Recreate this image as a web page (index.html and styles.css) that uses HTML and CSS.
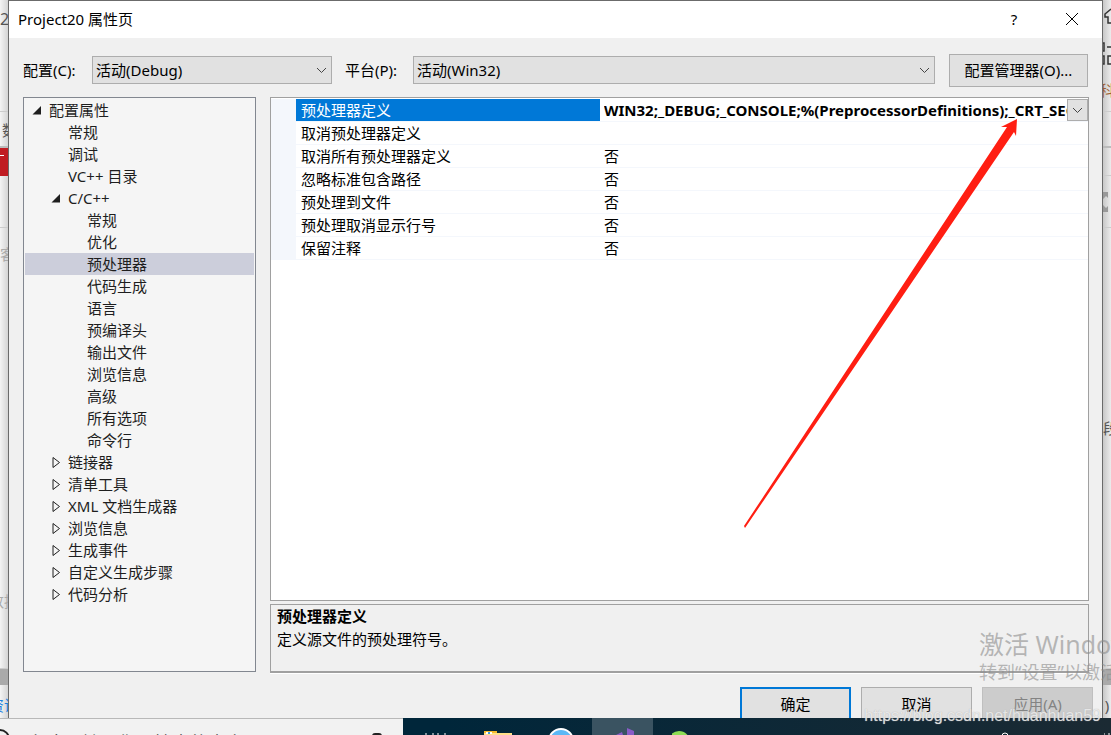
FILE: index.html
```html
<!DOCTYPE html>
<html lang="zh-CN">
<head>
    <meta charset="UTF-8">
    <meta name="viewport" content="width=device-width, initial-scale=1.0">
    <title>Project20 属性页</title>
    <link rel="stylesheet" href="styles.css">
</head>
<body>
    <div class="desktop">
        <!-- Page behind the dialog, left edge -->
        <div class="edge edge-left">
            <div class="edge-block edge-top"><span class="edge-title">2</span></div>
            <div class="edge-block edge-nav">数</div>
            <div class="edge-block edge-red"><i></i></div>
            <div class="edge-block edge-tools"></div>
            <div class="edge-block edge-body">
                <span class="faint">客</span>
                <span class="faint edge-cut">数据</span>
            </div>
            <div class="edge-scroll"></div>
            <div class="edge-status"><span class="edge-cut blue">资讯</span></div>
        </div>

        <div class="dialog">
            <div class="title-bar">
                <h1>Project20 属性页</h1>
                <button class="title-button" aria-label="帮助">?</button>
                <button class="title-button" aria-label="关闭">
                    <svg width="14" height="14" viewBox="0 0 14 14"><path d="M1 1L13 13M13 1L1 13" stroke="#000" fill="none"/></svg>
                </button>
            </div>

            <div class="config-bar">
                <label for="config">配置(C):</label>
                <div class="select-box select-config">
                    <select id="config"><option>活动(Debug)</option></select>
                    <svg class="chevron" width="11" height="7" viewBox="0 0 11 7"><path d="M1 1L5.500 5.500L10 1" stroke="#444" fill="none"/></svg>
                </div>
                <label for="platform" class="platform-label">平台(P):</label>
                <div class="select-box select-platform">
                    <select id="platform"><option>活动(Win32)</option></select>
                    <svg class="chevron" width="11" height="7" viewBox="0 0 11 7"><path d="M1 1L5.500 5.500L10 1" stroke="#444" fill="none"/></svg>
                </div>
                <button class="button manager-button">配置管理器(O)...</button>
            </div>

            <div class="main">
                <ul class="tree" role="tree">
                    <li class="level-1" role="treeitem"><svg width="9" height="9" viewBox="0 0 9 9"><path d="M8.500 0V8.500H0Z" fill="#1e1e1e"/></svg>配置属性</li>
                    <li class="level-2" role="treeitem">常规</li>
                    <li class="level-2" role="treeitem">调试</li>
                    <li class="level-2" role="treeitem">VC++ 目录</li>
                    <li class="level-2" role="treeitem"><svg width="9" height="9" viewBox="0 0 9 9"><path d="M8.500 0V8.500H0Z" fill="#1e1e1e"/></svg>C/C++</li>
                    <li class="level-3" role="treeitem">常规</li>
                    <li class="level-3" role="treeitem">优化</li>
                    <li class="level-3 selected" role="treeitem" aria-selected="true">预处理器</li>
                    <li class="level-3" role="treeitem">代码生成</li>
                    <li class="level-3" role="treeitem">语言</li>
                    <li class="level-3" role="treeitem">预编译头</li>
                    <li class="level-3" role="treeitem">输出文件</li>
                    <li class="level-3" role="treeitem">浏览信息</li>
                    <li class="level-3" role="treeitem">高级</li>
                    <li class="level-3" role="treeitem">所有选项</li>
                    <li class="level-3" role="treeitem">命令行</li>
                    <li class="level-2" role="treeitem"><svg width="9" height="11" viewBox="0 0 9 11"><path d="M1.500 0.500V10.500L8 5.500Z" stroke="#1e1e1e" fill="none"/></svg>链接器</li>
                    <li class="level-2" role="treeitem"><svg width="9" height="11" viewBox="0 0 9 11"><path d="M1.500 0.500V10.500L8 5.500Z" stroke="#1e1e1e" fill="none"/></svg>清单工具</li>
                    <li class="level-2" role="treeitem"><svg width="9" height="11" viewBox="0 0 9 11"><path d="M1.500 0.500V10.500L8 5.500Z" stroke="#1e1e1e" fill="none"/></svg>XML 文档生成器</li>
                    <li class="level-2" role="treeitem"><svg width="9" height="11" viewBox="0 0 9 11"><path d="M1.500 0.500V10.500L8 5.500Z" stroke="#1e1e1e" fill="none"/></svg>浏览信息</li>
                    <li class="level-2" role="treeitem"><svg width="9" height="11" viewBox="0 0 9 11"><path d="M1.500 0.500V10.500L8 5.500Z" stroke="#1e1e1e" fill="none"/></svg>生成事件</li>
                    <li class="level-2" role="treeitem"><svg width="9" height="11" viewBox="0 0 9 11"><path d="M1.500 0.500V10.500L8 5.500Z" stroke="#1e1e1e" fill="none"/></svg>自定义生成步骤</li>
                    <li class="level-2" role="treeitem"><svg width="9" height="11" viewBox="0 0 9 11"><path d="M1.500 0.500V10.500L8 5.500Z" stroke="#1e1e1e" fill="none"/></svg>代码分析</li>
                </ul>

                <div class="right">
                    <div class="properties">
                        <table>
                            <tr class="active">
                                <td class="gutter"></td>
                                <th><label for="definitions">预处理器定义</label></th>
                                <td>
                                    <div class="editor">
                                        <input type="text" id="definitions" value="WIN32;_DEBUG;_CONSOLE;%(PreprocessorDefinitions);_CRT_SECURE_NO_WARNINGS">
                                        <button class="drop-button" aria-label="展开">
                                            <svg width="11" height="7" viewBox="0 0 11 7"><path d="M1 1L5.500 5.500L10 1" stroke="#444" fill="none"/></svg>
                                        </button>
                                    </div>
                                </td>
                            </tr>
                            <tr><td class="gutter"></td><th>取消预处理器定义</th><td></td></tr>
                            <tr><td class="gutter"></td><th>取消所有预处理器定义</th><td>否</td></tr>
                            <tr><td class="gutter"></td><th>忽略标准包含路径</th><td>否</td></tr>
                            <tr><td class="gutter"></td><th>预处理到文件</th><td>否</td></tr>
                            <tr><td class="gutter"></td><th>预处理取消显示行号</th><td>否</td></tr>
                            <tr><td class="gutter"></td><th>保留注释</th><td>否</td></tr>
                        </table>
                    </div>
                    <div class="description">
                        <h2>预处理器定义</h2>
                        <p>定义源文件的预处理符号。</p>
                    </div>
                </div>
            </div>

            <div class="footer">
                <button class="button default">确定</button>
                <button class="button">取消</button>
                <button class="button" disabled>应用(A)</button>
            </div>
        </div>

        <!-- Page behind the dialog, right edge -->
        <div class="edge edge-right">
            <div class="edge-block edge-top">
                <svg width="8" height="66" viewBox="0 0 8 66">
                    <path d="M8 1L2 6V9H5V15H8" stroke="#333" stroke-width="1.500" fill="none"/>
                    <path d="M0 35H1V43H0M4 39H8M0 48H1V56H0M8 48H5V56H8" stroke="#333" stroke-width="1.500" fill="none"/>
                </svg>
                <span class="edge-cut brown">科</span>
            </div>
            <div class="edge-block edge-nav"></div>
            <div class="edge-block edge-blank"></div>
            <div class="edge-block edge-tools">
                <svg width="8" height="20" viewBox="0 0 8 20"><path d="M0 0H5V6L3 4L0 7ZM0 13L3 16L5 14V20H0Z" fill="#999"/></svg>
            </div>
            <div class="edge-block edge-body"><span class="edge-mid">段</span></div>
            <div class="edge-scroll"></div>
            <div class="edge-status"><span class="edge-cut">)</span></div>
        </div>

        <svg class="arrow" width="280" height="414" viewBox="0 0 280 414">
            <path d="M275 2L259 10L265 10L2 409L3 411L272 15L274 19Z" fill="#ff1e12"/>
        </svg>
        <div class="activate">
            <div class="activate-title">激活 Windows</div>
            <div>转到“设置”以激活 Windows。</div>
        </div>
    </div>

    <div class="taskbar">
        <label class="search">
            <svg width="12" height="17" viewBox="0 0 12 17"><circle cx="0" cy="20" r="9" stroke="#222" stroke-width="2" fill="none"/></svg>
            <input type="text" placeholder="在这里输入你要搜索的内容">
            <svg class="mic" width="12" height="17" viewBox="0 0 12 17"><rect x="2" y="15" width="8" height="12" rx="2" stroke="#222" stroke-width="2" fill="#888"/></svg>
        </label>
        <div class="tile">
            <svg width="24" height="17" viewBox="0 0 24 17"><path d="M3 15V17M15 15V17M22 15V17M9 16H11" stroke="#fff"/></svg>
        </div>
        <div class="tile">
            <svg width="28" height="17" viewBox="0 0 28 17"><path d="M0 13H13V17H0Z" fill="#f5b92d"/><path d="M13 15H28V17H0V15Z" fill="#ffe08a"/><path d="M2 14H8V16H2Z" fill="#fff"/><path d="M4 14H6V16H4Z" fill="#3b9be0"/></svg>
        </div>
        <div class="tile">
            <svg width="26" height="17" viewBox="0 0 26 17"><circle cx="13" cy="23" r="12" fill="#5bb8f5" stroke="#fff" stroke-width="2"/></svg>
        </div>
        <div class="tile open">
            <svg width="32" height="17" viewBox="0 0 32 17"><path d="M20 10L27 13V17H20ZM9 17L15 14L16 17Z" fill="#8a5cc7"/></svg>
        </div>
        <div class="tile">
            <svg width="26" height="17" viewBox="0 0 26 17"><circle cx="7" cy="24" r="11" fill="#8fdd55"/></svg>
        </div>
        <div class="tray">
            <svg width="12" height="17" viewBox="0 0 12 17"><circle cx="6" cy="18" r="3" stroke="#fff" fill="none"/></svg>
            <svg width="8" height="17" viewBox="0 0 8 17"><path d="M1 16H2M6 15V17" stroke="#fff"/></svg>
        </div>
        <div class="blog-mark">https://blog.csdn.net/huanhuan59</div>
    </div>
</body>
</html>
```
FILE: styles.css
```css
* {
    box-sizing: border-box;
}

body {
    margin: 0;
    height: 100vh;
    display: flex;
    flex-direction: column;
    overflow: hidden;
    font-family: "Noto Sans", "Noto Sans CJK SC", sans-serif;
    font-size: 15px;
    line-height: 22px;
    color: #000;
    background: #f0f0f0;
}

button,
input,
select {
    font: inherit;
    color: inherit;
    margin: 0;
    padding: 0;
    border: none;
    border-radius: 0;
}

svg {
    flex: none;
}

.desktop {
    flex: 1;
    min-height: 0;
    display: flex;
    position: relative;
    overflow: hidden;
}

/* Page edges behind the dialog */
.edge {
    width: 8px;
    flex: none;
    display: flex;
    flex-direction: column;
    overflow: hidden;
    color: #555;
}

.edge-left {
    background: linear-gradient(to right, #f4f4f4, #d4d4d4);
}

.edge-right {
    background: linear-gradient(to right, #c8c8c8, #ececec);
}

.edge-block {
    flex: none;
    border-bottom: 1px solid #ccc;
    overflow: hidden;
}

.edge-top {
    height: 112px;
    padding-top: 8px;
}

.edge-title {
    font-size: 16px;
}

.edge-nav {
    height: 36px;
    padding: 7px 0 0 2px;
    border-bottom: 2px solid #bbb;
}

.edge-red {
    height: 28px;
    padding-top: 7px;
    background: #c01c22;
    border: none;
}

.edge-red i {
    display: block;
    width: 4px;
    height: 1px;
    background: #fff;
}

.edge-blank {
    height: 28px;
}

.edge-tools {
    height: 52px;
    padding-top: 16px;
}

.edge-body {
    flex: 1;
    display: flex;
    flex-direction: column;
    justify-content: space-between;
    padding: 15px 0 56px;
}

.edge-cut {
    display: flex;
    justify-content: center;
    white-space: nowrap;
}

.edge-mid {
    margin: auto 0;
}

.faint {
    color: #aaa;
}

.blue {
    color: #1a7fe0;
}

.brown {
    color: #a06030;
}

.edge-scroll {
    height: 16px;
    flex: none;
    background: #aaa;
}

.edge-status {
    height: 33px;
    flex: none;
    padding-top: 9px;
}

/* Dialog */
.dialog {
    flex: 1;
    min-width: 0;
    display: flex;
    flex-direction: column;
    overflow: hidden;
    background: #f0f0f0;
    border: 1px solid #6b6b6b;
    border-bottom: none;
}

.title-bar {
    flex: none;
    display: flex;
    align-items: center;
    height: 37px;
    padding: 0 1px 2px 9px;
    background: #fff;
}

.title-bar h1 {
    flex: 1;
    margin: 0;
    font-size: 15px;
    font-weight: normal;
}

.title-button {
    width: 58px;
    height: 35px;
    display: flex;
    align-items: center;
    justify-content: center;
    background: #fff;
}

.config-bar {
    flex: none;
    display: flex;
    align-items: center;
    height: 59px;
    padding: 5px 14px 0;
}

.config-bar label {
    width: 69px;
    flex: none;
}

.config-bar .platform-label {
    width: 68px;
    margin-left: 13px;
}

.select-box {
    display: grid;
    align-items: center;
}

.select-box > * {
    grid-area: 1 / 1;
}

.select-config {
    flex: 240;
}

.select-platform {
    flex: 522;
}

select {
    appearance: none;
    width: 100%;
    height: 28px;
    padding-left: 3px;
    background: #e1e1e1;
    border: 1px solid #adadad;
}

.chevron {
    justify-self: end;
    margin-right: 5px;
    pointer-events: none;
}

.button {
    background: #e1e1e1;
    border: 1px solid #adadad;
}

.manager-button {
    width: 139px;
    height: 33px;
    flex: none;
    margin-left: 14px;
}

.main {
    flex: 1;
    min-height: 0;
    display: flex;
    gap: 14px;
    padding: 0 13px 0 14px;
}

.tree {
    width: 233px;
    flex: none;
    margin: 0;
    padding: 1px;
    overflow: hidden;
    list-style: none;
    color: #1e1e1e;
    background: #f5f5f5;
    border: 1px solid #828790;
}

.tree li {
    display: flex;
    align-items: center;
    height: 22px;
}

.tree svg {
    width: 16px;
    margin-left: -20px;
    margin-right: 4px;
}

.level-1 {
    padding-left: 24px;
}

.level-2 {
    padding-left: 43px;
}

.level-3 {
    padding-left: 62px;
}

.selected {
    background: #cccedb;
}

.right {
    flex: 1;
    min-width: 0;
    display: flex;
    flex-direction: column;
    gap: 3px;
    margin-bottom: -1px;
}

.properties {
    flex: 1;
    min-height: 0;
    padding-top: 1px;
    overflow: hidden;
    background: #fff;
    border: 1px solid #a0a0a0;
}

table {
    width: 100%;
    table-layout: fixed;
    border-collapse: separate;
    border-spacing: 0;
}

th,
td {
    height: 23px;
    padding: 0 0 0 4px;
    font-weight: normal;
    text-align: left;
    line-height: 22px;
    border-bottom: 1px solid #f4f7fc;
}

th {
    width: 304px;
    padding-left: 5px;
}

.gutter {
    width: 25px;
    padding: 0;
    background: #f4f7fc;
}

.active th {
    color: #fff;
    background: #0078d7;
    background-clip: padding-box;
}

.editor {
    display: flex;
    height: 22px;
}

.editor input {
    flex: 1;
    min-width: 0;
    font-weight: bold;
    background: #fff;
    outline: none;
}

.drop-button {
    width: 21px;
    flex: none;
    display: flex;
    align-items: center;
    justify-content: center;
    background: #e1e1e1;
    border: 1px solid #adadad;
}

.description {
    flex: none;
    height: 69px;
    padding: 0 6px;
    border: 1px solid #a0a0a0;
    border-bottom-width: 2px;
    box-shadow: 0 1px #fff;
}

.description h2,
.description p {
    margin: 0;
    font-size: 15px;
    line-height: 23px;
}

.footer {
    flex: none;
    display: flex;
    justify-content: flex-end;
    gap: 10px;
    height: 46px;
    padding: 15px 9px 0;
}

.footer .button {
    width: 111px;
    height: 33px;
}

.footer .default {
    border: 2px solid #0078d7;
}

.footer .button:disabled {
    color: #838383;
    background: #ccc;
    border-color: #bfbfbf;
}

/* Overlays */
.arrow {
    position: absolute;
    left: 742px;
    top: 117px;
    pointer-events: none;
}

.activate {
    position: absolute;
    left: 979px;
    bottom: 34px;
    font-size: 18px;
    line-height: 24px;
    white-space: nowrap;
    color: rgba(140, 140, 140, 0.6);
    pointer-events: none;
}

.activate-title {
    font-size: 25px;
    line-height: 32px;
}

/* Taskbar */
.taskbar {
    flex: none;
    display: flex;
    position: relative;
    height: 17px;
    background: linear-gradient(to right, #00263a 40%, #1b2a33);
}

.search {
    width: 403px;
    display: flex;
    align-items: flex-start;
    overflow: hidden;
    background: #f2f2f2;
    border-top: 1px solid #b8b8b8;
}

.search input {
    flex: 1;
    height: 28px;
    margin-top: 10px;
    padding-left: 16px;
    font-size: 18px;
    background: none;
    outline: none;
}

.search input::placeholder {
    color: #333;
}

.mic {
    margin-right: 20px;
}

.tile {
    width: 63px;
    display: flex;
    justify-content: center;
    overflow: hidden;
}

.tile.open {
    width: 61px;
    background: #3a5361;
}

.tray {
    flex: 1;
    display: flex;
    justify-content: flex-end;
    gap: 92px;
}

.blog-mark {
    position: absolute;
    right: 10px;
    bottom: 8px;
    font-family: "Liberation Sans", sans-serif;
    font-size: 16px;
    color: rgba(255, 255, 255, 0.7);
    text-shadow: 0 0 1px #aaa;
}
```
